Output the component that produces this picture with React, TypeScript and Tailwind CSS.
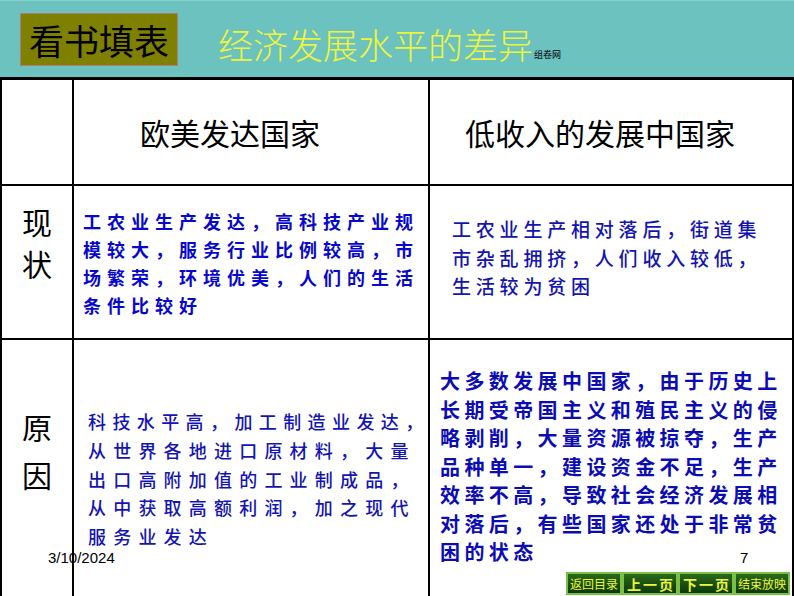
import React from 'react';

const cjk = "font-['Noto_Sans_CJK_SC',sans-serif]";

type Line = { text: string; tracking: string };

const statusWest: Line[] = [
  { text: '工农业生产发达，高科技产业规', tracking: 'tracking-[6px]' },
  { text: '模较大，服务行业比例较高，市', tracking: 'tracking-[6px]' },
  { text: '场繁荣，环境优美，人们的生活', tracking: 'tracking-[6px]' },
  { text: '条件比较好', tracking: 'tracking-[6px]' },
];

const statusPoor: Line[] = [
  { text: '工农业生产相对落后，街道集', tracking: 'tracking-[4.8px]' },
  { text: '市杂乱拥挤，人们收入较低，', tracking: 'tracking-[4.8px]' },
  { text: '生活较为贫困', tracking: 'tracking-[4.8px]' },
];

const causeWest: Line[] = [
  { text: '科技水平高，加工制造业发达，', tracking: 'tracking-[6.4px]' },
  { text: '从世界各地进口原材料，大量', tracking: 'tracking-[7.2px]' },
  { text: '出口高附加值的工业制成品，', tracking: 'tracking-[7.2px]' },
  { text: '从中获取高额利润，加之现代', tracking: 'tracking-[7.2px]' },
  { text: '服务业发达', tracking: 'tracking-[7.2px]' },
];

const causePoor: Line[] = [
  { text: '大多数发展中国家，由于历史上', tracking: 'tracking-[4.4px]' },
  { text: '长期受帝国主义和殖民主义的侵', tracking: 'tracking-[4.4px]' },
  { text: '略剥削，大量资源被掠夺，生产', tracking: 'tracking-[4.4px]' },
  { text: '品种单一，建设资金不足，生产', tracking: 'tracking-[4.4px]' },
  { text: '效率不高，导致社会经济发展相', tracking: 'tracking-[4.4px]' },
  { text: '对落后，有些国家还处于非常贫', tracking: 'tracking-[4.4px]' },
  { text: '困的状态', tracking: 'tracking-[4.4px]' },
];

const TextBlock = ({ lines, className }: { lines: Line[]; className: string }) => (
  <div className={`whitespace-nowrap ${cjk} ${className}`}>
    {lines.map((l) => (
      <div key={l.text} className={l.tracking}>
        {l.text}
      </div>
    ))}
  </div>
);

const NavButton = ({ label, big }: { label: string; big?: boolean }) => (
  <div
    className={`w-[56px] h-[23px] flex items-center justify-center whitespace-nowrap leading-none border-2 border-[#7cbf45] bg-gradient-to-b from-[#2a6a1c] to-[#0b3a0b] text-[#eef53a] ${cjk} ${
      big ? 'text-[14px] font-bold tracking-[2px] pl-[2px]' : 'text-[12px]'
    }`}
  >
    {label}
  </div>
);

export default function App() {
  return (
    <div className="relative w-[794px] h-[596px] overflow-hidden bg-white">
      {/* title band */}
      <div className="h-[77px] bg-[#6bc2bf] border-t border-[#86d0cd] flex items-start">
        <div className="ml-[20px] mt-[12px] w-[158px] h-[53px] bg-[#808000] border border-[#b07c80] flex items-center justify-center">
          <span className={`${cjk} text-[35px] leading-none text-black`}>看书填表</span>
        </div>
        <div className="ml-[40px] mt-[20px] flex items-end">
          <span className={`${cjk} text-[35px] leading-[45px] font-light text-[#eef43c]`}>经济发展水平的差异</span>
          <span className={`${cjk} text-[9px] leading-none text-black mb-[7px] ml-[1px]`}>组卷网</span>
        </div>
      </div>

      {/* table */}
      <div className="grid grid-cols-[70px_354px_362px] grid-rows-[104px_152px_262px] gap-[2px] px-[2px] pt-[3px] bg-black">
        <div className="bg-white" />
        <div className="bg-white flex items-center pl-[66px]">
          <span className={`${cjk} text-[30px] text-black`}>欧美发达国家</span>
        </div>
        <div className="bg-white flex items-center pl-[35px]">
          <span className={`${cjk} text-[30px] text-black`}>低收入的发展中国家</span>
        </div>

        <div className={`bg-white flex flex-col items-center pt-[14px] ${cjk} text-[30px] leading-[42px] text-black`}>
          <span>现</span>
          <span>状</span>
        </div>
        <div className="bg-white pl-[9px] pt-[21px]">
          <TextBlock lines={statusWest} className="text-[18px] leading-[28px] font-bold text-[#0808cc]" />
        </div>
        <div className="bg-white pl-[22px] pt-[29px]">
          <TextBlock lines={statusPoor} className="text-[19px] leading-[28.5px] font-medium text-[#1414b0]" />
        </div>

        <div className={`bg-white flex flex-col items-center pt-[62px] ${cjk} text-[30px] leading-[48px] text-black`}>
          <span>原</span>
          <span>因</span>
        </div>
        <div className="bg-white pl-[14px] pt-[67px]">
          <TextBlock lines={causeWest} className="text-[18px] leading-[28.75px] font-medium text-[#1414b4]" />
        </div>
        <div className="bg-white pl-[10px] pt-[27px]">
          <TextBlock lines={causePoor} className="text-[20px] leading-[28.5px] font-bold text-[#0c0cb4]" />
        </div>
      </div>

      {/* slide footer */}
      <div className="absolute left-[48px] top-[549px] font-['Liberation_Sans',sans-serif] text-[15px] leading-[18px] text-black">
        3/10/2024
      </div>
      <div className="absolute left-[740px] top-[549px] font-['Liberation_Sans',sans-serif] text-[15px] leading-[18px] text-black">
        7
      </div>
      <div className="absolute left-[566px] top-[572px] flex">
        <NavButton label="返回目录" />
        <NavButton label="上一页" big />
        <NavButton label="下一页" big />
        <NavButton label="结束放映" />
      </div>
    </div>
  );
}
